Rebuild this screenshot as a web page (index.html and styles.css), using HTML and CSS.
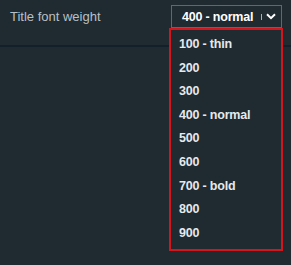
FILE: index.html
```html
<!DOCTYPE html>
<html lang="en">
<head>
  <meta charset="UTF-8">
  <title>Title font weight</title>
  <link rel="stylesheet" href="styles.css">
</head>
<body>
  <div class="row">
    <span class="label">Title font weight</span>
    <div class="select">
      <span class="value">400 - normal</span>
      <span class="sep"></span>
      <svg class="chevron" width="10" height="7" viewBox="0 0 10 7">
        <path d="M1 1.2 L5 5.2 L9 1.2" fill="none" stroke="#fff" stroke-width="2"/>
      </svg>

      <!-- menu aberto -->
      <ul class="menu">
        <li>100 - thin</li>
        <li>200</li>
        <li>300</li>
        <li>400 - normal</li>
        <li>500</li>
        <li>600</li>
        <li>700 - bold</li>
        <li>800</li>
        <li>900</li>
      </ul>
    </div>
  </div>
</body>
</html>
```

FILE: styles.css
```css
* {
  box-sizing: border-box;
  margin: 0;
  padding: 0;
}

body {
  font-family: 'Liberation Sans', Arial, sans-serif;
  background-color: #1f2a31;
  width: 291px;
  height: 265px;
  overflow: hidden;
}

.row {
  display: flex;
  justify-content: space-between;
  align-items: flex-start;
  height: 47px;
  padding: 5px 9px 0 10px;
  border-bottom: 2px solid #132029;
}

.label {
  font-size: 13px;
  line-height: 23px;
  color: #b9c0c5;
}

.select {
  position: relative;
  display: flex;
  align-items: center;
  flex-shrink: 0;
  width: 111px;
  height: 23px;
  padding-left: 10px;
  border: 1px solid #5d6970;
  color: #fff;
}

.value {
  font-size: 12.5px;
  font-weight: bold;
  letter-spacing: -0.2px;
  white-space: nowrap;
}

.sep {
  flex-shrink: 0;
  width: 1px;
  height: 6px;
  margin: 1px 0 0 8px;
  background-color: #a9b0b4;
}

.chevron {
  flex-shrink: 0;
  margin-left: 4px;
}

.menu {
  position: absolute;
  top: 22px;
  left: -3px;
  width: 114px;
  list-style: none;
  padding: 3px 0 4px;
  background-color: #1f2a31;
  border: 2px solid #d4161c;
  z-index: 10;
}

.menu li {
  height: 23.6px;
  line-height: 23.6px;
  padding-left: 8px;
  font-size: 12.5px;
  font-weight: bold;
  letter-spacing: -0.2px;
  white-space: nowrap;
  color: #e6e9eb;
}
```
